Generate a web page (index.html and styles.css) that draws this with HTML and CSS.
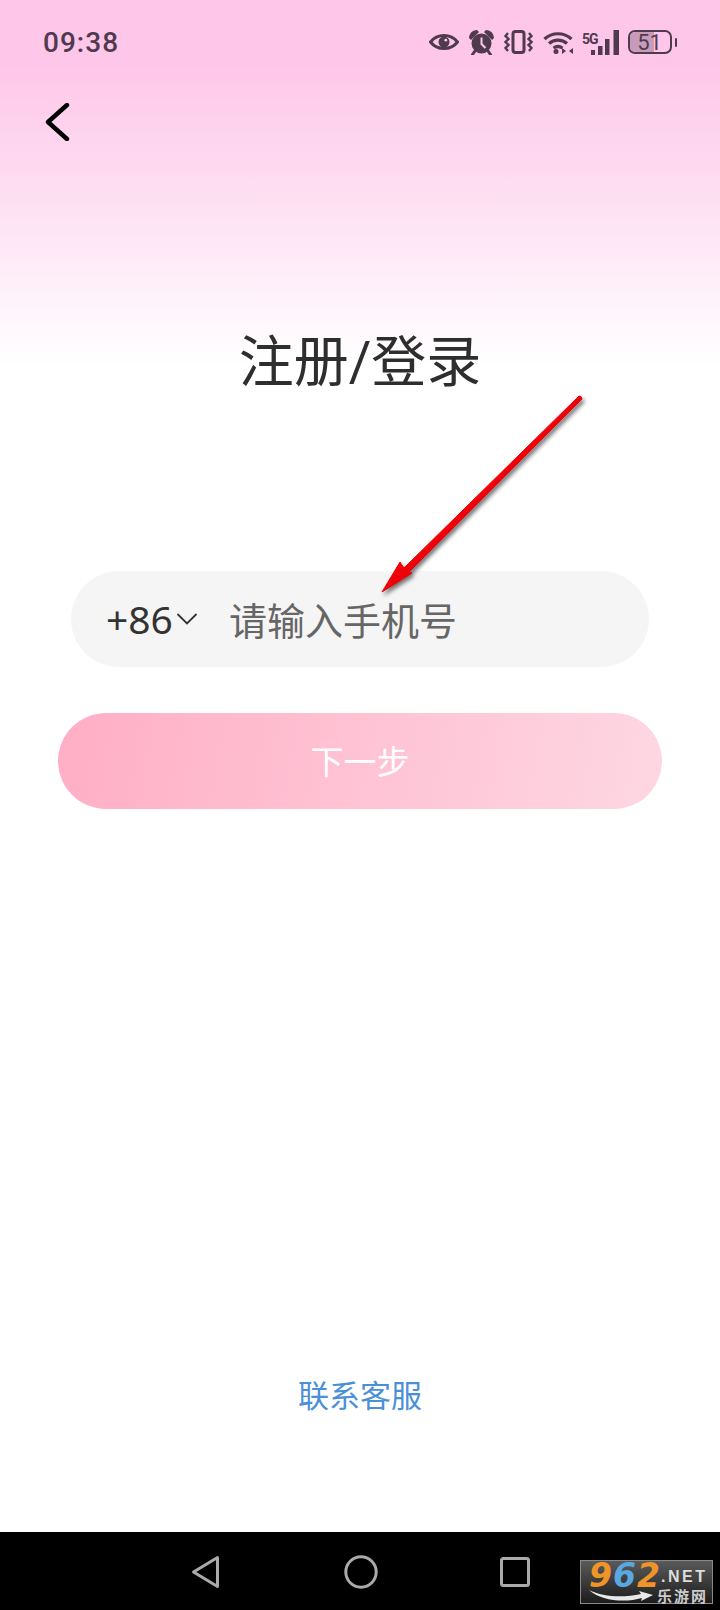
FILE: index.html
```html
<!DOCTYPE html>
<html lang="zh-CN">
<head>
<meta charset="utf-8">
<title>注册/登录</title>
<link rel="stylesheet" href="styles.css">
</head>
<body>
<div class="page">
  <main class="content">
    <header class="status">
      <span class="time">09:38</span>
      <div class="status-icons">
        <svg class="ic" width="30" height="16" viewBox="0 0 30 16"><path d="M1.500 8C5 3.500 10 1.500 15 1.500S25 3.500 28.500 8C25 12.500 20 14.500 15 14.500S5 12.500 1.500 8z" fill="none" stroke="#4f3a4e" stroke-width="3"/><circle cx="15" cy="8" r="5.500" fill="#4f3a4e"/><circle cx="16.800" cy="6.200" r="1.400" fill="#fdc8ea"/></svg>
        <svg class="ic" width="25" height="25" viewBox="0 0 25 25"><circle cx="12.500" cy="13.500" r="10" fill="#4f3a4e"/><path d="M12.500 7.500v6.500l4 4" fill="none" stroke="#fdc8ea" stroke-width="2"/><path d="M0 8C.500 3 3 .500 8 0l2 2-8 8zM25 8C24.500 3 22 .500 17 0l-2 2 8 8z" fill="#4f3a4e"/><path d="M6 21l-2.500 3.500M19 21l2.500 3.500" stroke="#4f3a4e" stroke-width="3" stroke-linecap="round"/></svg>
        <svg class="ic" width="29" height="24" viewBox="0 0 29 24"><rect x="9" y="1.500" width="11" height="21" rx="2.500" fill="none" stroke="#4f3a4e" stroke-width="3"/><path d="M4 3L1.500 6 4.500 9 1.500 12l3 3-3 3L4 21M25 3l2.500 3-3 3 3 3-3 3 3 3L25 21" fill="none" stroke="#4f3a4e" stroke-width="2.400"/></svg>
        <svg class="ic" width="30" height="23" viewBox="0 0 30 23"><path d="M1.500 8C9 1 21 1 28.500 8M6 12.500c5-4.500 13-4.500 18 0M10.500 17c3-2 6-2 9 0" fill="none" stroke="#4f3a4e" stroke-width="3.200"/><circle cx="13" cy="20.500" r="2.500" fill="#4f3a4e"/><path d="M19 17l4 3-4 3zM30 17l-4 3 4 3z" fill="#4f3a4e"/></svg>
        <div class="signal">
          <span class="five-g">5G</span>
          <svg width="28" height="25" viewBox="0 0 28 25"><path d="M0 20h4v5H0zM7 16h4.500v9H7zM14 9h4.500v16H14zM22.500 0h5.500v25h-5.500z" fill="#4f3a4e"/></svg>
        </div>
        <div class="battery">
          <div class="battery-body"><span class="battery-fill"></span><span class="battery-num">51</span></div>
          <span class="battery-cap"></span>
        </div>
      </div>
    </header>
    <button class="back" aria-label="返回">
      <svg width="26" height="38" viewBox="0 0 26 38"><path d="M23 2L4 19l19 17" fill="none" stroke="#000" stroke-width="4.400" stroke-linecap="round" stroke-linejoin="round"/></svg>
    </button>
    <h1 class="title">注册/登录</h1>
    <form class="form">
      <div class="phone">
        <span class="code">+86</span>
        <svg class="caret" width="22" height="14" viewBox="0 0 22 14"><path d="M1.500 2l9.500 9.500L20.500 2" fill="none" stroke="#333" stroke-width="1.800"/></svg>
        <span class="placeholder">请输入手机号</span>
      </div>
      <div class="next">下一步</div>
    </form>
    <a class="service">联系客服</a>
  </main>
  <nav class="navbar">
    <svg width="30" height="34" viewBox="0 0 30 34"><path d="M26.500 2.500L2.500 17l24 14.500z" fill="none" stroke="#aaa" stroke-width="3" stroke-linejoin="round"/></svg>
    <svg width="34" height="34" viewBox="0 0 34 34"><circle cx="17" cy="17" r="15.200" fill="none" stroke="#aaa" stroke-width="3"/></svg>
    <svg width="30" height="30" viewBox="0 0 30 30"><rect x="1.500" y="1.500" width="27" height="27" rx="2" fill="none" stroke="#aaa" stroke-width="3"/></svg>
  </nav>
  <svg class="arrow" width="220" height="210" viewBox="0 0 220 210">
    <path d="M2 197L20 167l4 6L199 1q3 0 3 3L29 177l3 1z" fill="#f00008" stroke="#f00008" stroke-width="1" stroke-linejoin="round"/>
  </svg>
  <div class="watermark">
    <div class="wm-left">
      <span class="wm-num"><b class="o">9</b><b class="b">6</b><b class="o">2</b></span>
      <svg class="wm-swoosh" width="64" height="12" viewBox="0 0 64 12"><path d="M0 0c14 7 34 8 52 4l-2-3 14 4-12 6 1-3C36 13 12 11 0 0z" fill="#e8e8e8"/></svg>
    </div>
    <div class="wm-side"><span class="wm-net">.NET</span><span class="wm-cn">乐游网</span></div>
  </div>
</div>
</body>
</html>
```
FILE: styles.css
```css
* { box-sizing: border-box; }
html, body { margin: 0; padding: 0; }
body { width: 720px; height: 1610px; overflow: hidden; background: #fff; font-family: "Noto Sans CJK SC", "Noto Sans", sans-serif; }
.page { position: relative; width: 720px; height: 1610px; display: flex; flex-direction: column; }
.content { flex: 1; display: flex; flex-direction: column; align-items: center; background: linear-gradient(180deg, #fec6e9 0, #fec6e9 60px, #fee3f4 220px, #ffffff 365px); }
.status { width: 100%; height: 84px; padding: 0 43px 0 43px; display: flex; align-items: center; justify-content: space-between; }
.time { font-family: Roboto, sans-serif; font-weight: 500; font-size: 28px; letter-spacing: 1px; color: #4f3a4e; }
.status-icons { display: flex; align-items: center; gap: 10px; }
.ic { display: block; flex: none; }
.signal { display: flex; align-items: flex-end; height: 25px; margin-left: -1px; }
.five-g { font-family: Roboto, sans-serif; font-weight: 700; font-size: 14px; line-height: 14px; letter-spacing: -1px; color: #4f3a4e; align-self: flex-start; margin: 2px -7px 0 0; }
.battery { display: flex; align-items: center; gap: 3px; margin-right: 0; margin-left: -1px; }
.battery-body { position: relative; width: 44px; height: 24px; border: 2.500px solid #4f3a4e; border-radius: 7px; overflow: hidden; display: flex; align-items: center; justify-content: center; }
.battery-fill { position: absolute; left: 0; top: 0; bottom: 0; width: 60%; background: #c99bba; }
.battery-num { position: relative; font-family: Roboto, sans-serif; font-size: 22px; color: #4f3a4e; }
.battery-cap { width: 2.500px; height: 9px; border-radius: 2px; background: #4f3a4e; }
.back { align-self: flex-start; margin: 19px 0 0 44px; padding: 0; border: 0; background: none; display: block; height: 38px; }
.back svg { display: block; }
.title { margin: 189px 0 -1px; font-family: Roboto, "Noto Sans CJK SC", sans-serif; font-weight: 400; font-size: 55px; line-height: 64px; color: #2e2e2e; }
.form { width: 100%; margin-top: 178px; display: flex; flex-direction: column; align-items: center; gap: 46px; }
.phone { width: 578px; height: 96px; border-radius: 48px; background: #f5f5f5; padding: 0 0 2px 35px; display: flex; align-items: center; }
.code { font-family: "Noto Sans", sans-serif; font-size: 39px; color: #333; }
.caret { margin: 2px 0 0 3px; }
.placeholder { margin-left: 31px; font-size: 38px; color: #666; }
.next { width: 604px; height: 96px; border-radius: 48px; padding-bottom: 3px; background: linear-gradient(100deg, #ffaec5, #fed7e3); color: #fff; font-size: 33px; display: flex; align-items: center; justify-content: center; }
.service { margin-top: auto; margin-bottom: 116px; font-size: 31px; line-height: 44px; color: #4a90d9; }
.navbar { height: 78px; flex: none; background: #000; display: flex; align-items: flex-start; padding: 23px 0 0 191px; gap: 0; }
.navbar svg:nth-child(2) { margin-left: 123px; }
.navbar svg:nth-child(3) { margin-left: 122px; margin-top: 2px; }
.arrow { position: absolute; left: 380px; top: 395px; filter: drop-shadow(2px 3px 2px rgba(0, 0, 0, .55)); }
.watermark { position: absolute; left: 580px; top: 1560px; width: 133px; height: 44px; border: 1px solid #8a8a8a; background: linear-gradient(180deg, #5a5a5a, #1c1c1c); display: flex; align-items: flex-start; padding: 2px 0 0 8px; }
.wm-left { display: flex; flex-direction: column; width: 72px; flex: none; }
.wm-num { font-family: "DejaVu Sans", sans-serif; font-style: italic; font-size: 33px; line-height: 26px; letter-spacing: 1px; white-space: nowrap; }
.wm-num b { font-weight: 700; }
.wm-swoosh { display: block; margin-top: 1px; }
.o { color: #ef9428; }
.b { color: #59a8e0; }
.wm-side { display: flex; flex-direction: column; min-width: 0; }
.wm-net { font-family: "Liberation Sans", sans-serif; font-weight: 700; font-size: 16px; line-height: 20px; margin-top: 4px; letter-spacing: 2.500px; color: #ddd; white-space: nowrap; }
.wm-cn { font-size: 15px; line-height: 17px; font-weight: 700; letter-spacing: 2px; margin-left: -4px; color: #ccc; white-space: nowrap; }
```
